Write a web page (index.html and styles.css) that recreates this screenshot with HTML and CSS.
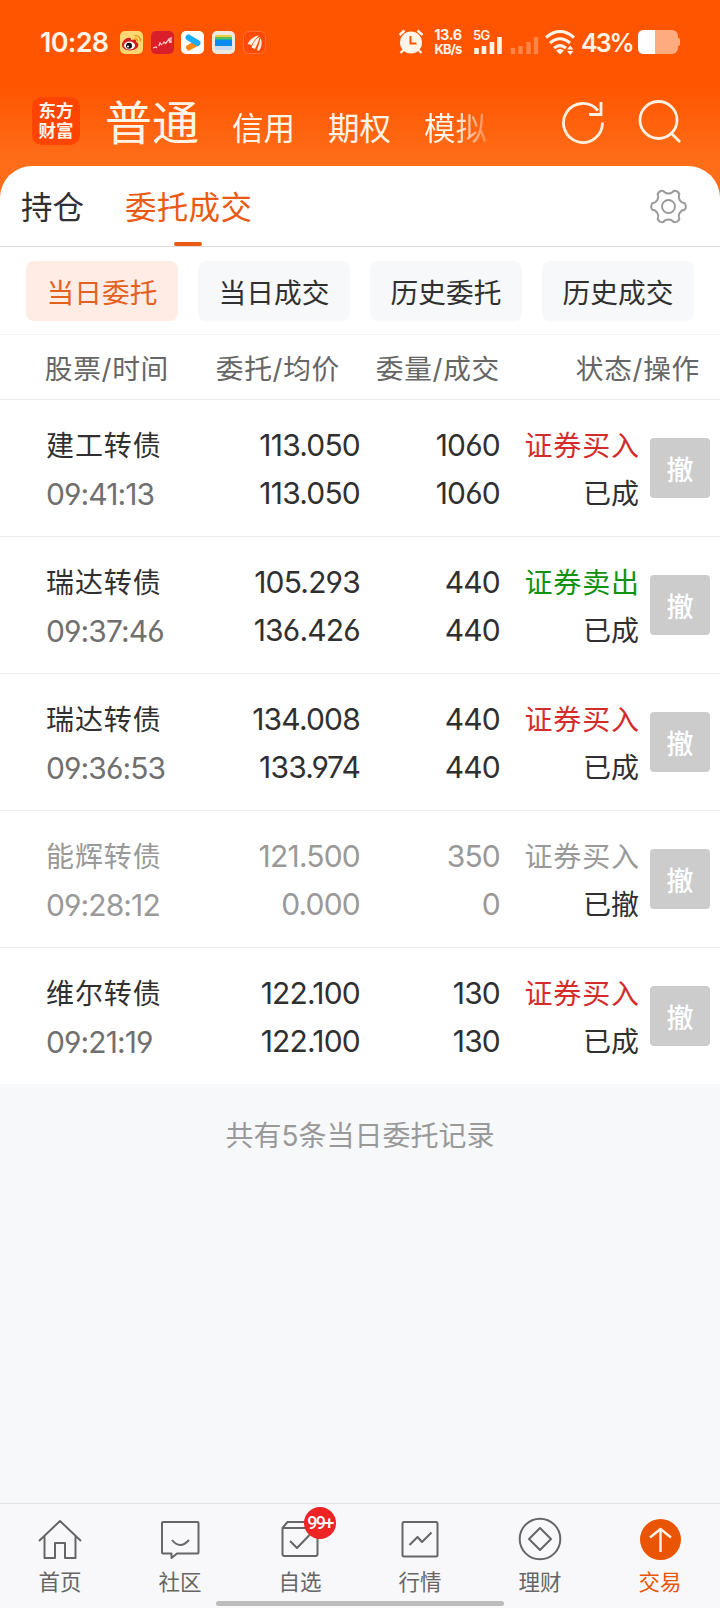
FILE: index.html
```html
<!DOCTYPE html>
<html lang="zh-CN">
<head>
    <meta charset="UTF-8">
    <meta name="viewport" content="width=device-width, initial-scale=1.0">
    <title>委托成交</title>
    <link rel="stylesheet" href="styles.css">
</head>
<body>
    <header class="top">
        <div class="status-bar">
            <span class="clock">10:28</span>
            <div class="app-icons">
                <svg viewBox="0 0 23 23">
                    <rect width="23" height="23" rx="5" fill="#fbd873"/>
                    <path d="M2 14c0-4 5-8 8-7 1 0 1 1 1 2 3-1 6-1 5 2 3 1 3 4 1 6-4 4-15 3-15-3z" fill="#d81e20"/>
                    <ellipse cx="9.5" cy="14.5" rx="5.5" ry="4" fill="#fff"/>
                    <circle cx="9" cy="14.8" r="3" fill="#111"/>
                    <circle cx="8" cy="15.5" r="1" fill="#fff"/>
                    <path d="M14.5 7.5q3 0 3 3M14.5 4.5q6 0 6 6" fill="none" stroke="#f39a1e" stroke-width="1.5"/>
                </svg>
                <svg viewBox="0 0 23 23">
                    <rect width="23" height="23" rx="5" fill="#da1f2b"/>
                    <path d="M2 17l3-1 1 1M8 15l1-3 2 2M12 13l1-2 2 2M15 12l3-4 1 4M19 8l1-1v5" fill="none" stroke="#ffc9c4" stroke-width="1.3"/>
                </svg>
                <svg viewBox="0 0 23 23">
                    <rect width="23" height="23" rx="5" fill="#fff"/>
                    <path d="M8 16.5l8-4.5" stroke="#ff8a12" stroke-width="6" stroke-linecap="round"/>
                    <path d="M7.5 6.5l9 5.5" stroke="#18aef5" stroke-width="6" stroke-linecap="round"/>
                </svg>
                <svg viewBox="0 0 23 23">
                    <rect width="23" height="23" rx="5" fill="#ece9df"/>
                    <rect x="3" y="4" width="17" height="6" rx="2" fill="#f5c842"/>
                    <rect x="3" y="6" width="17" height="6" fill="#4cc35b"/>
                    <rect x="3" y="8.5" width="17" height="6.5" fill="#078df0"/>
                    <rect x="3" y="15" width="17" height="4" fill="#c9dded"/>
                </svg>
                <svg viewBox="0 0 23 23">
                    <rect x=".5" y=".5" width="22" height="22" rx="5" fill="#ff4a08" stroke="#ff7138"/>
                    <path d="M4.5 13Q8 5.5 16 4.5 12 8 8.5 14zM8.5 16.5Q11 8.5 17 5.5 15 12 12 18zM14 19Q16.5 12 17.5 7 20.5 13 16 20z" fill="#fff0e4"/>
                </svg>
            </div>
            <div class="status-right">
                <svg class="alarm" viewBox="0 0 26 26">
                    <circle cx="13" cy="13.5" r="11" fill="#fff4e8"/>
                    <path d="M1.5 6l5-4.5M24.5 6l-5-4.5M5.5 21l-3 3M20.5 21l3 3" stroke="#fff4e8" stroke-width="2.4"/>
                    <path d="M12.5 7v7.5h6" fill="none" stroke="#ff5500" stroke-width="2"/>
                </svg>
                <div class="speed"><span>13.6</span><span class="unit">KB/s</span></div>
                <div class="signal">
                    <span>5G</span>
                    <svg viewBox="0 0 29 18" width="29" height="18">
                        <path d="M3.5 17v-6M11 17V9M19 17V5M26.5 17V0" stroke="#fff4e8" stroke-width="4.6"/>
                    </svg>
                </div>
                <svg class="signal-off" viewBox="0 0 29 18">
                    <path d="M3 17v-6M10.5 17V9M18.5 17V5M26 17V0" stroke="#ff8448" stroke-width="4.4"/>
                </svg>
                <svg class="wifi" viewBox="0 0 30 25">
                    <path d="M1 7.5Q15-4.5 29 7.5M5 13Q15 4.5 25 13M9 18.2Q15 13 21 18.2" fill="none" stroke="#fff4e8" stroke-width="3"/>
                    <path d="M11 20.5q4-3 8 0l-4 4zM22 19.5l3.200-4 3.200 4zM22 21l3.200 4 3.200-4z" fill="#fff4e8"/>
                </svg>
                <span class="percent">43%</span>
                <svg class="battery" viewBox="0 0 42 24">
                    <path d="M39 8h1.5q1.5 0 1.5 2v4q0 2-1.5 2H39z" fill="#ffab80"/>
                    <rect width="40" height="24" rx="6" fill="#ffab80"/>
                    <path d="M17 0H6Q0 0 0 6v12q0 6 6 6h11z" fill="#fff"/>
                </svg>
            </div>
        </div>
        <div class="title-bar">
            <div class="logo"><span>东方</span><span>财富</span></div>
            <nav class="accounts">
                <a class="current">普通</a>
                <a>信用</a>
                <a>期权</a>
                <a class="fade">模拟</a>
            </nav>
            <svg class="refresh" viewBox="0 0 44 44">
                <path d="M41.5 22.5A19.500 19.500 0 1 1 37 10.500"/>
                <path d="M40 2v12.500H28"/>
            </svg>
            <svg class="search" viewBox="0 0 44 44">
                <circle cx="20.5" cy="20" r="18.5"/>
                <path d="M33 33l9 9"/>
            </svg>
        </div>
    </header>

    <main class="panel">
        <div class="tabs">
            <a class="tab">持仓</a>
            <a class="tab active">委托成交</a>
            <svg class="gear" viewBox="-20 -20 40 40">
                <path d="M17.5-3.5A6 6 0 0 1 17.5 3.5A7 7 0 0 0 11.8 13.4A6 6 0 0 1 5.7 16.9A7 7 0 0 0-5.7 16.9A6 6 0 0 1-11.8 13.4A7 7 0 0 0-17.5 3.5A6 6 0 0 1-17.5-3.5A7 7 0 0 0-11.8-13.4A6 6 0 0 1-5.7-16.9A7 7 0 0 0 5.7-16.9A6 6 0 0 1 11.8-13.4A7 7 0 0 0 17.5-3.5Z"/>
                <circle r="7"/>
            </svg>
        </div>
        <div class="filters">
            <button class="filter active">当日委托</button>
            <button class="filter">当日成交</button>
            <button class="filter">历史委托</button>
            <button class="filter">历史成交</button>
        </div>
        <div class="list-head">
            <span>股票/时间</span>
            <span>委托/均价</span>
            <span>委量/成交</span>
            <span>状态/操作</span>
        </div>

        <div class="order">
            <div class="name"><p>建工转债</p><p class="time">09:41:13</p></div>
            <div class="num"><p>113.050</p><p>113.050</p></div>
            <div class="num"><p>1060</p><p>1060</p></div>
            <div class="state"><p class="buy">证券买入</p><p class="result">已成</p></div>
            <button class="cancel">撤</button>
        </div>
        <div class="order">
            <div class="name"><p>瑞达转债</p><p class="time">09:37:46</p></div>
            <div class="num"><p>105.293</p><p>136.426</p></div>
            <div class="num"><p>440</p><p>440</p></div>
            <div class="state"><p class="sell">证券卖出</p><p class="result">已成</p></div>
            <button class="cancel">撤</button>
        </div>
        <div class="order">
            <div class="name"><p>瑞达转债</p><p class="time">09:36:53</p></div>
            <div class="num"><p>134.008</p><p>133.974</p></div>
            <div class="num"><p>440</p><p>440</p></div>
            <div class="state"><p class="buy">证券买入</p><p class="result">已成</p></div>
            <button class="cancel">撤</button>
        </div>
        <div class="order revoked">
            <div class="name"><p>能辉转债</p><p class="time">09:28:12</p></div>
            <div class="num"><p>121.500</p><p>0.000</p></div>
            <div class="num"><p>350</p><p>0</p></div>
            <div class="state"><p class="buy">证券买入</p><p class="result">已撤</p></div>
            <button class="cancel">撤</button>
        </div>
        <div class="order">
            <div class="name"><p>维尔转债</p><p class="time">09:21:19</p></div>
            <div class="num"><p>122.100</p><p>122.100</p></div>
            <div class="num"><p>130</p><p>130</p></div>
            <div class="state"><p class="buy">证券买入</p><p class="result">已成</p></div>
            <button class="cancel">撤</button>
        </div>
    </main>

    <p class="summary">共有5条当日委托记录</p>

    <nav class="bottom-nav">
        <a>
            <svg viewBox="0 0 44 44"><path d="M1 24L22 4l21 20M6.5 19.5v21.5h10.5V26h10v15h10.5V19.5"/></svg>
            <span>首页</span>
        </a>
        <a>
            <svg viewBox="0 0 44 44"><path d="M5 5h34.500q1 0 1 1v29.500q0 1-1 1H19l-5.500 4.500v-4.500H5q-1 0-1-1V6q0-1 1-1zM14 23q8 10 17 0"/></svg>
            <span>社区</span>
        </a>
        <a>
            <svg viewBox="0 0 44 44"><path d="M4.5 11h35v26q0 2-2 2h-31q-2 0-2-2V11l5-6H35l4.5 6M12 24l7 7 12.500-13"/></svg>
            <span>自选</span>
            <b class="badge">99+</b>
        </a>
        <a>
            <svg viewBox="0 0 44 44"><rect x="4.5" y="5" width="35" height="34.5" rx="1.5"/><path d="M11.5 28l8-8 4.500 5 9.500-9.500"/></svg>
            <span>行情</span>
        </a>
        <a>
            <svg viewBox="0 0 44 44"><circle cx="22" cy="22" r="20.3"/><path d="M22 11l11 11-11 11-11-11z"/></svg>
            <span>理财</span>
        </a>
        <a class="active">
            <svg viewBox="0 0 44 44"><circle class="disc" cx="22.5" cy="22.5" r="20.5"/><path d="M22.5 35V12M12 20.500l10.500-8.500L33 20.500"/></svg>
            <span>交易</span>
        </a>
        <i class="home-bar"></i>
    </nav>
</body>
</html>
```

FILE: styles.css
```css
* {
    box-sizing: border-box;
}

body {
    margin: 0;
    width: 720px;
    height: 1608px;
    display: flex;
    flex-direction: column;
    overflow: hidden;
    background: #f7f8fa;
    color: #303030;
    font-family: Inter, "Noto Sans CJK SC", sans-serif;
    font-size: 28px;
}

p {
    margin: 0;
}

button {
    border: none;
    padding: 0;
    font-family: inherit;
    color: inherit;
}

svg {
    display: block;
    flex: none;
}

/* header */
.top {
    height: 206px;
    margin-bottom: -40px;
    background: linear-gradient(#ff5500 85px, #ff6d18 160px);
    color: #fff4e8;
}

.status-bar {
    height: 84px;
    padding-left: 40px;
    display: flex;
    align-items: center;
}

.clock {
    width: 80px;
    font-size: 27px;
    font-weight: 600;
    letter-spacing: -0.7px;
    line-height: 30px;
    padding-top: 2px;
}

.app-icons {
    display: flex;
    gap: 7.7px;
}

.app-icons svg {
    width: 23px;
    height: 23px;
}

.status-right {
    display: flex;
    align-items: center;
    margin-left: auto;
    padding-right: 40px;
}

.alarm {
    width: 26px;
    height: 26px;
    margin-right: 9px;
}

.speed {
    width: 30px;
    margin-right: 10px;
    font-size: 14.5px;
    font-weight: 700;
    line-height: 14px;
    letter-spacing: -0.4px;
    text-align: center;
    white-space: nowrap;
}

.speed span {
    display: block;
}

.speed .unit {
    font-size: 13px;
    letter-spacing: -0.8px;
}

.signal {
    width: 29px;
    height: 26px;
    margin-right: 8px;
    font-size: 13px;
    font-weight: 600;
    line-height: 13px;
    letter-spacing: -0.8px;
}

.signal span {
    display: block;
    height: 8px;
}

.signal-off {
    width: 29px;
    height: 18px;
    margin: 8px 6px 0 0;
}

.wifi {
    width: 30px;
    height: 25px;
    margin-right: 6px;
}

.percent {
    width: 57px;
    font-size: 25px;
    font-weight: 600;
    letter-spacing: -2px;
    line-height: 30px;
    padding-top: 1px;
}

.battery {
    width: 42px;
    height: 24px;
}

.title-bar {
    height: 82px;
    padding: 0 32px;
    display: flex;
    align-items: center;
}

.logo {
    width: 48px;
    height: 48px;
    margin-top: -8px;
    padding-top: 4px;
    border-radius: 10px;
    background: #ff4400;
    font-size: 17.5px;
    font-weight: 700;
    line-height: 20px;
    text-align: center;
}

.logo span {
    display: block;
}

.accounts {
    display: flex;
    align-items: baseline;
    gap: 33px;
    margin: -11px auto 0 25px;
    font-size: 31.5px;
}

.accounts .current {
    font-size: 47px;
}

.accounts .fade {
    color: transparent;
    background: linear-gradient(90deg, #fff4e8 50%, #ff8a48);
    background-clip: text;
    -webkit-background-clip: text;
}

.refresh,
.search {
    width: 44px;
    height: 44px;
    margin-top: -6px;
    fill: none;
    stroke: #fff0e0;
    stroke-width: 2.8;
}

.refresh {
    margin-right: 33px;
}

.search {
    margin-right: 6px;
}

/* white panel */
.panel {
    position: relative;
    border-radius: 32px 32px 0 0;
    background: #fff;
}

.tabs {
    height: 81px;
    padding: 0 32px 0 21px;
    display: flex;
    align-items: center;
    border-bottom: 1px solid #dcdcdc;
}

.tab {
    position: relative;
    height: 80px;
    margin-right: 41px;
    font-size: 31.5px;
    line-height: 84px;
}

.tab.active {
    color: #e95a13;
    letter-spacing: 0.3px;
}

.tab.active::after {
    content: "";
    position: absolute;
    left: 50%;
    bottom: 0;
    width: 28px;
    height: 4px;
    margin-left: -15px;
    border-radius: 2px;
    background: #e95a13;
}

.gear {
    width: 37px;
    height: 37px;
    margin-left: auto;
    margin-right: 1px;
    fill: none;
    stroke: #9a9a9a;
    stroke-width: 2.1;
}

.filters {
    height: 88px;
    padding: 14px 26px 0;
    display: grid;
    grid-template-columns: repeat(4, 152px);
    gap: 20px;
    border-bottom: 1px solid #f5f5f5;
}

.filter {
    height: 60px;
    border-radius: 8px;
    background: #f7f8fa;
    font-size: 27.7px;
    line-height: 64px;
}

.filter.active {
    background: #ffede5;
    color: #e4601f;
}

.list-head {
    height: 64px;
    padding-left: 44px;
    display: grid;
    grid-template-columns: 125px 171px 160px 200px;
    line-height: 68px;
    color: #666;
    text-align: right;
    white-space: nowrap;
    font-size: 27.7px;
    letter-spacing: 0.7px;
}

.order {
    height: 137px;
    padding: 3px 10px 0 46px;
    display: grid;
    grid-template-columns: 154px 160px 140px 139px 60px;
    align-items: center;
    border-top: 1px solid #ebebeb;
    line-height: 48px;
}

.name p,
.state p {
    letter-spacing: 0.9px;
}

.name .time {
    color: #707070;
    font-size: 30px;
    letter-spacing: -0.9px;
}

.num {
    font-size: 30px;
    letter-spacing: -0.8px;
    text-align: right;
}

.num p {
    margin-top: -1px;
    margin-bottom: 1px;
}

.time,
.num {
    font-feature-settings: "cv03", "cv04";
}

.state {
    text-align: right;
    margin-right: -1px;
}

.state .result {
    letter-spacing: 0;
    padding-right: 1px;
}

.buy {
    color: #d42b2b;
}

.sell {
    color: #109210;
}

.revoked p,
.revoked .name .time {
    color: #999;
}

.revoked .state .result {
    color: #303030;
}

.cancel {
    width: 60px;
    height: 60px;
    margin: -3px 0 0 11px;
    border-radius: 4px;
    background: #ccc;
    color: #fff;
    font-size: 27px;
    font-weight: 500;
    line-height: 65px;
}

.summary {
    margin-top: 32px;
    color: #999;
    font-size: 28px;
    line-height: 40px;
    text-align: center;
}

/* bottom navigation */
.bottom-nav {
    position: relative;
    height: 105px;
    margin-top: auto;
    padding-top: 13px;
    display: grid;
    grid-template-columns: repeat(6, 120px);
    border-top: 1px solid #e2e3e5;
    background: #f8f8fa;
    color: #666;
    font-size: 21.5px;
}

.bottom-nav a {
    position: relative;
    display: flex;
    flex-direction: column;
    align-items: center;
}

.bottom-nav span {
    margin-top: 5px;
    line-height: 32px;
}

.bottom-nav svg {
    width: 44px;
    height: 44px;
    fill: none;
    stroke: #666;
    stroke-width: 2;
    stroke-linejoin: round;
}

.bottom-nav .active {
    color: #e95504;
}

.bottom-nav .active svg {
    stroke: #fff4e8;
    stroke-width: 2.4;
}

.bottom-nav .disc {
    fill: #e95504;
    stroke: none;
}

.badge {
    position: absolute;
    left: 64px;
    top: -10px;
    width: 32px;
    height: 32px;
    border-radius: 50%;
    background: #ee2424;
    color: #fff;
    font-family: Roboto, sans-serif;
    font-size: 18px;
    font-weight: 500;
    line-height: 32px;
    letter-spacing: -1.7px;
    text-align: center;
}

.home-bar {
    position: absolute;
    left: 216px;
    bottom: 2px;
    width: 288px;
    height: 5px;
    border-radius: 3px;
    background: #bcbcbc;
}
```
